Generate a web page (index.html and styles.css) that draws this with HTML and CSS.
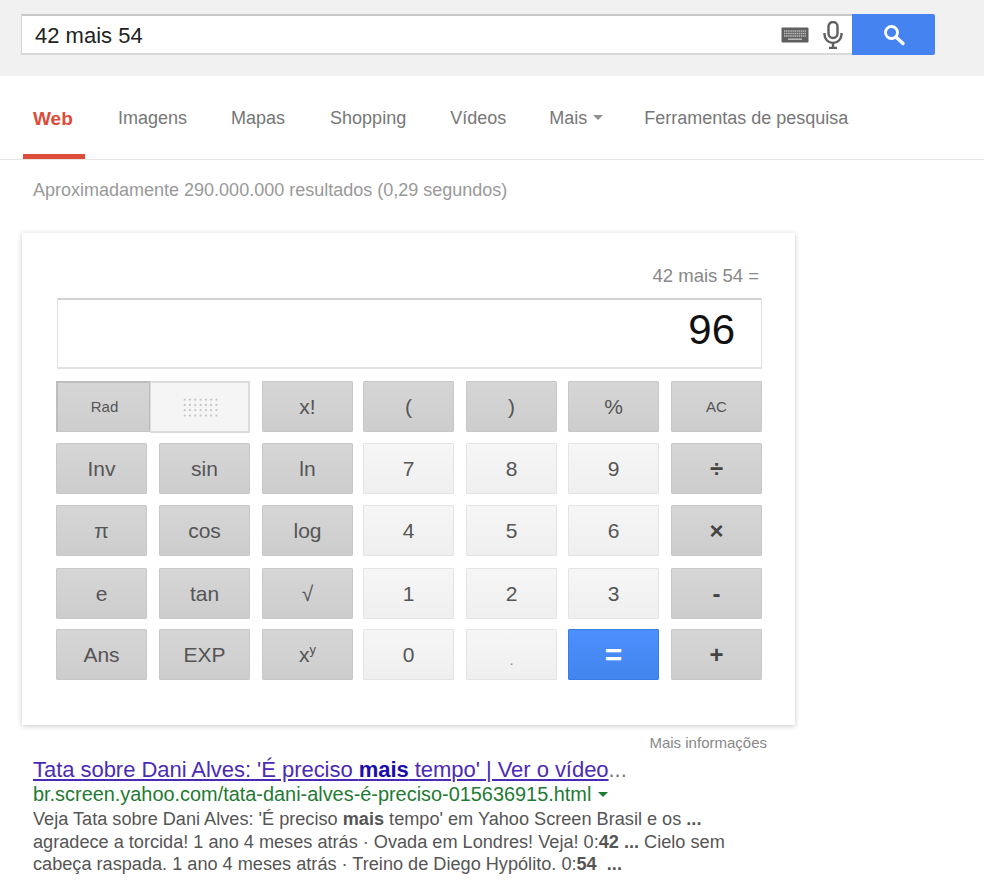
FILE: index.html
```html
<!DOCTYPE html>
<html lang="pt">
<head>
<meta charset="utf-8">
<title>42 mais 54</title>
<link rel="stylesheet" href="styles.css">
</head>
<body>
<header class="top">
  <div class="search">
    <div class="box">
      <span class="query">42 mais 54</span>
      <svg class="kbd" width="28" height="16" viewBox="0 0 28 16"><rect x="0.500" y="0.500" width="27" height="15" rx="1" fill="#5f5f5f"/><path d="M3 4h22M3 6.500h22M3 9h22" stroke="#bdbdbd" stroke-width="1.300" stroke-dasharray="1.500 .6"/><path d="M7 12.200h14" stroke="#bdbdbd" stroke-width="1.500"/></svg>
      <svg class="mic" width="22" height="28" viewBox="0 0 22 28"><rect x="6.500" y="1" width="9" height="16" rx="4.500" fill="#fff" stroke="#5f5f5f" stroke-width="2.400"/><path d="M2.500 12v1.500a8.500 8.500 0 0 0 17 0V12M11 22v5M7 27h8" fill="none" stroke="#5f5f5f" stroke-width="2.400"/></svg>
    </div>
    <button class="go" type="button"><svg width="24" height="24" viewBox="0 0 24 24"><circle cx="9.500" cy="9.500" r="6" fill="none" stroke="#fff" stroke-width="2.800"/><path d="M14 14l7 6.500" stroke="#fff" stroke-width="3.400" stroke-linecap="round"/></svg></button>
  </div>
</header>
<nav class="tabs">
  <a class="tab on">Web</a>
  <a class="tab t1">Imagens</a>
  <a class="tab t2">Mapas</a>
  <a class="tab t3">Shopping</a>
  <a class="tab t4">Vídeos</a>
  <a class="tab t5">Mais<i class="caret"></i></a>
  <a class="tab t6">Ferramentas de pesquisa</a>
</nav>
<p class="stats">Aproximadamente 290.000.000 resultados (0,29 segundos)</p>
<section class="card">
  <div class="expr">42 mais 54 =</div>
  <div class="display">96</div>
  <div class="keys">
    <div class="key toggle"><span class="rad">Rad</span><span class="dots"></span></div>
    <div class="key dark">x!</div><div class="key dark">(</div><div class="key dark">)</div><div class="key dark">%</div><div class="key dark small">AC</div>
    <div class="key dark">Inv</div><div class="key dark">sin</div><div class="key dark">ln</div><div class="key light">7</div><div class="key light">8</div><div class="key light">9</div><div class="key dark op">÷</div>
    <div class="key dark">π</div><div class="key dark">cos</div><div class="key dark">log</div><div class="key light">4</div><div class="key light">5</div><div class="key light">6</div><div class="key dark op">×</div>
    <div class="key dark">e</div><div class="key dark">tan</div><div class="key dark">√</div><div class="key light">1</div><div class="key light">2</div><div class="key light">3</div><div class="key dark op">-</div>
    <div class="key dark">Ans</div><div class="key dark">EXP</div><div class="key dark"><span>x<sup>y</sup></span></div><div class="key light">0</div><div class="key light dot">.</div><div class="key blue">=</div><div class="key dark op">+</div>
  </div>
</section>
<div class="more">Mais informações</div>
<article class="result">
  <h3 class="title"><a>Tata sobre Dani Alves: 'É preciso <b>mais</b> tempo' | Ver o vídeo</a>...</h3>
  <div class="url">br.screen.yahoo.com/tata-dani-alves-é-preciso-015636915.html<i class="arrow"></i></div>
  <p class="snippet">Veja Tata sobre Dani Alves: 'É preciso <b>mais</b> tempo' em Yahoo Screen Brasil e os <b>...</b><br>agradece a torcida! 1 ano 4 meses atrás · Ovada em Londres! Veja! 0:<b>42</b> <b>...</b> Cielo sem<br>cabeça raspada. 1 ano 4 meses atrás · Treino de Diego Hypólito. 0:<b>54</b> &nbsp;<b>...</b></p>
</article>
</body>
</html>
```
FILE: styles.css
```css
* { box-sizing: border-box; }
html, body { margin: 0; padding: 0; background: #fff; }
body { width: 984px; height: 892px; overflow: hidden; font-family: "Liberation Sans", Arial, sans-serif; color: #333; }

.top { height: 76px; background: #f1f1f1; padding: 14px 0 0 21px; }
.search { display: flex; width: 914px; height: 41px; }
.box { flex: 1; display: flex; align-items: center; background: #fff; border: 1px solid #d4d4d4; border-top: 2px solid #c8c8c8; border-bottom: 2px solid #d9d9d9; border-right: 0; padding-left: 13px; }
.query { flex: 1; padding-top: 2px; font-size: 22px; color: #222; }
.kbd { margin-right: 13px; }
.mic { margin-right: 8px; }
.go { width: 83px; border: 0; padding: 0; background: #4584f0; border-radius: 0 2px 2px 0; display: flex; align-items: center; justify-content: center; }

.tabs { height: 84px; display: flex; padding-left: 23px; border-bottom: 1px solid #e5e5e5; font-size: 18px; color: #777; }
.tab { height: 83px; padding: 32px 10px 0; white-space: nowrap; }
.tab.on { color: #dd4b39; font-size: 19px; font-weight: bold; border-bottom: 5px solid #dd4b39; width: 62px; }
.t1 { margin-left: 23px; }
.t2 { margin-left: 24px; }
.t3 { margin-left: 25px; }
.t4 { margin-left: 24px; }
.t5 { margin-left: 23px; }
.t6 { margin-left: 21px; }
.caret { display: inline-block; margin-left: 6px; vertical-align: 4px; border: 5px solid transparent; border-top: 5px solid #909090; border-bottom: 0; }

.stats { margin: 0; padding: 20px 0 0 33px; height: 73px; font-size: 18px; color: #999; }

.card { width: 773px; height: 492px; margin-left: 22px; padding: 32px 33px 0 34px; background: #fff; box-shadow: 0 1px 5px rgba(0,0,0,.22); }
.expr { height: 33px; padding-right: 3px; text-align: right; font-size: 18.500px; color: #888; }
.display { height: 71px; margin-left: 1px; border: 1px solid #e2e2e2; border-top: 2px solid #d2d2d2; border-bottom: 2px solid #e2e2e2; text-align: right; padding: 6px 26px 0 0; font-size: 42px; color: #111; background: #fff; }
.keys { display: grid; grid-template-columns: 103px 103px 101px 103px 102px 103px 91px; grid-template-rows: 62px 62px 63px 61px 51px; margin-top: 12px; }
.key { width: 91px; height: 51px; display: flex; align-items: center; justify-content: center; font-size: 21px; border-radius: 1px; color: #555; }
.dark { background: linear-gradient(#d6d6d6, #cdcdcd); border: 1px solid #c8c8c8; }
.light { background: linear-gradient(#f6f6f6, #efefef); border: 1px solid #e4e4e4; }
.blue { background: linear-gradient(#4d90fe, #4285ee); border: 1px solid #3a7ce6; color: #fff; font-size: 30px; font-weight: bold; }
.op { font-size: 24px; font-weight: bold; color: #444; }
.small { font-size: 15px; }
.dot { font-size: 15px; padding-top: 10px; color: #888; }
sup { font-size: 13px; line-height: 0; vertical-align: 8px; }
.toggle { grid-column: span 2; width: 194px; justify-content: flex-start; align-items: flex-start; }
.rad { width: 94px; height: 51px; display: flex; align-items: center; justify-content: center; padding: 0 0 2px 2px; font-size: 15px; background: linear-gradient(#d6d6d6, #cdcdcd); border: 2px solid #bdbdbd; border-right-width: 1px; border-bottom: 1px solid #c6c6c6; }
.dots { width: 100px; height: 52px; border: 2px solid #dcdcdc; border-left-width: 1px; padding: 14px 29px 13px 31px; background: radial-gradient(circle, #c0c0c0 1.100px, transparent 1.400px) 0 0 / 5.300px 5.300px content-box, #f5f5f5; }

.more { padding: 9px 217px 0 0; height: 32px; text-align: right; font-size: 15px; color: #888; }
.result { padding-left: 33px; }
.title { margin: 0; font-weight: normal; font-size: 22px; line-height: 25px; letter-spacing: -.04px; color: #777; white-space: nowrap; }
.title a { color: #4b2bb5; text-decoration: underline; }
.title b { color: #1a0dab; }
.url { font-size: 19.900px; line-height: 25px; color: #1f7a33; white-space: nowrap; }
.arrow { display: inline-block; margin-left: 7px; vertical-align: 4px; border: 5px solid transparent; border-top: 5px solid #1f7a33; border-bottom: 0; }
.snippet { margin: 1px 0 0; font-size: 18.150px; line-height: 22.500px; color: #555; white-space: nowrap; }
```
